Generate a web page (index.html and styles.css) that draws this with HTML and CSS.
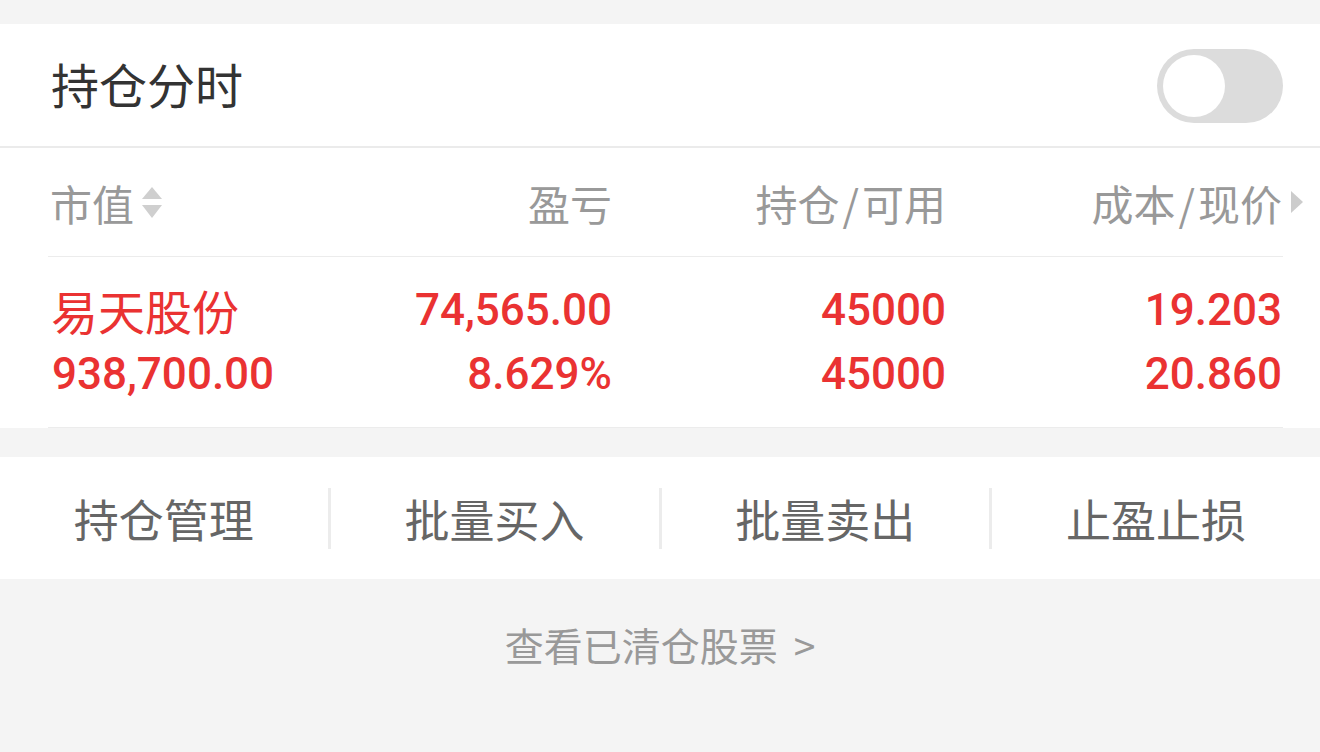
FILE: index.html
```html
<!DOCTYPE html>
<html lang="zh-CN">
<head>
  <meta charset="UTF-8">
  <title>持仓分时</title>
  <link rel="stylesheet" href="styles.css">
</head>
<body>
  <div class="top-gap"></div>

  <div class="head">
    <span class="head-title">持仓分时</span>
    <div class="switch"><div class="knob"></div></div>
  </div>

  <div class="table">
    <div class="row th">
      <div class="cell left">市值
        <svg class="sort" width="20" height="36" viewBox="0 0 20 36">
          <polygon points="10,3 20,15 0,15" fill="#cfcfcf"/>
          <polygon points="0,21 20,21 10,34" fill="#cfcfcf"/>
        </svg>
      </div>
      <div class="cell">盈亏</div>
      <div class="cell">持仓<span class="slash">/</span>可用</div>
      <div class="cell">成本<span class="slash">/</span>现价
        <svg class="more" width="12" height="22" viewBox="0 0 12 22">
          <polygon points="0,0 12,11 0,22" fill="#cccccc"/>
        </svg>
      </div>
    </div>

    <div class="data">
      <div class="row td">
        <div class="cell left name">易天股份</div>
        <div class="cell">74,565.00</div>
        <div class="cell">45000</div>
        <div class="cell">19.203</div>
      </div>
      <div class="row td">
        <div class="cell left">938,700.00</div>
        <div class="cell">8.629%</div>
        <div class="cell">45000</div>
        <div class="cell">20.860</div>
      </div>
    </div>
  </div>

  <div class="actions">
    <div class="act">持仓管理</div>
    <div class="act">批量买入</div>
    <div class="act">批量卖出</div>
    <div class="act">止盈止损</div>
  </div>

  <div class="cleared">查看已清仓股票<span class="gt">&gt;</span></div>
</body>
</html>
```

FILE: styles.css
```css
body {
  margin: 0;
  background: #f4f4f4;
  font-family: "Noto Sans CJK SC", sans-serif;
}
.top-gap {
  height: 24px;
}
.head {
  height: 122px;
  background: #fff;
  border-bottom: 2px solid #ebebeb;
  display: flex;
  align-items: center;
  justify-content: space-between;
  padding: 0 37px 0 51px;
}
.head-title {
  font-size: 48px;
  color: #333;
  margin-top: -4px;
}
.switch {
  width: 126px;
  height: 74px;
  border-radius: 37px;
  background: #dcdcdc;
  display: flex;
  align-items: center;
  padding-left: 6px;
  box-sizing: border-box;
  margin-top: 2px;
}
.knob {
  width: 62px;
  height: 62px;
  border-radius: 50%;
  background: #fff;
}
.table {
  background: #fff;
  padding: 0 37px 0 48px;
}
.row {
  display: grid;
  grid-template-columns: 292px 268px 334px 336px;
  padding-left: 4px;
}
.cell {
  text-align: right;
  white-space: nowrap;
}
.cell.left {
  text-align: left;
}
.th {
  height: 108px;
  align-items: center;
  border-bottom: 1px solid #ececec;
  font-size: 42px;
  color: #999;
}
.th .cell {
  display: flex;
  align-items: center;
  justify-content: flex-end;
}
.th .cell.left {
  justify-content: flex-start;
  margin-left: -2px;
}
.slash {
  margin: 0 3px;
}
.sort {
  margin-left: 8px;
}
.more {
  margin-right: -21px;
  margin-left: 9px;
}
.data {
  padding: 18px 0 20px;
  border-bottom: 1px solid #ececec;
}
.td {
  height: 66px;
  align-items: center;
  font-family: Roboto, sans-serif;
  font-weight: 500;
  font-size: 44px;
  color: #ea3232;
}
.td .name {
  font-family: "Noto Sans CJK SC", sans-serif;
  font-weight: 400;
  font-size: 47px;
  margin-left: -1px;
}
.actions {
  margin-top: 29px;
  height: 122px;
  background: #fff;
  display: flex;
  align-items: center;
}
.act {
  flex: 1;
  height: 61px;
  display: flex;
  align-items: center;
  justify-content: center;
  font-size: 45px;
  color: #666;
  border-left: 3px solid #ececec;
}
.act:first-child {
  border-left: none;
}
.cleared {
  padding-top: 40px;
  line-height: 50px;
  text-align: center;
  font-size: 39px;
  color: #999;
}
.gt {
  margin-left: 16px;
}
```
